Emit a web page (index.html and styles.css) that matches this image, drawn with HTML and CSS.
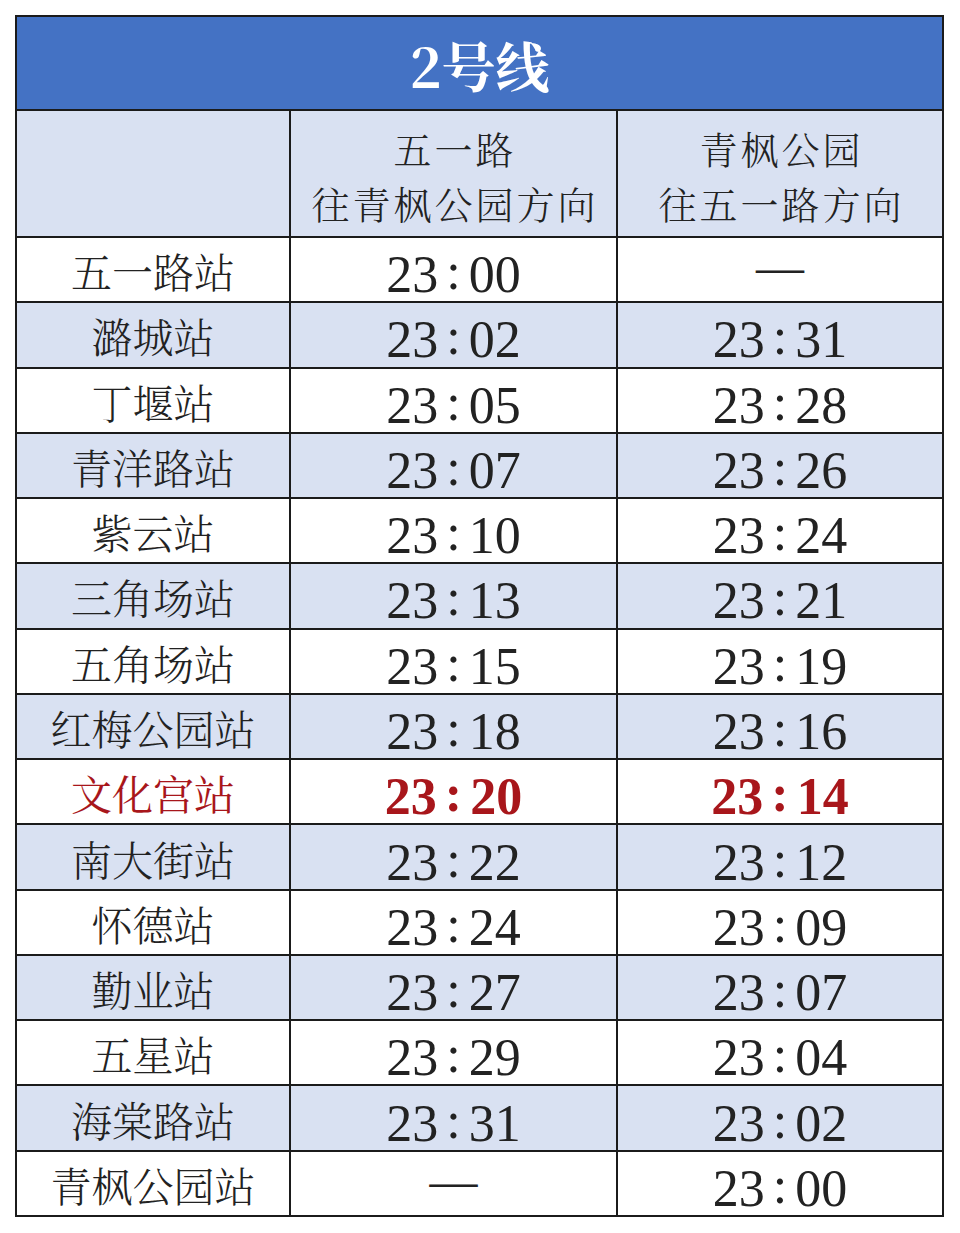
FILE: index.html
```html
<!DOCTYPE html>
<html lang="zh-CN">
<head>
<meta charset="utf-8">
<title>2号线</title>
<link rel="stylesheet" href="styles.css">
</head>
<body>
<div class="sheet">
  <div class="cell title">2号线</div>
  <div class="cell head"></div>
  <div class="cell head"><span>五一路</span><span>往青枫公园方向</span></div>
  <div class="cell head"><span>青枫公园</span><span>往五一路方向</span></div>

  <div class="cell name">五一路站</div><div class="cell time">23<i>:</i>00</div><div class="cell time"><b class="dash">—</b></div>
  <div class="cell name alt">潞城站</div><div class="cell time alt">23<i>:</i>02</div><div class="cell time alt">23<i>:</i>31</div>
  <div class="cell name">丁堰站</div><div class="cell time">23<i>:</i>05</div><div class="cell time">23<i>:</i>28</div>
  <div class="cell name alt">青洋路站</div><div class="cell time alt">23<i>:</i>07</div><div class="cell time alt">23<i>:</i>26</div>
  <div class="cell name">紫云站</div><div class="cell time">23<i>:</i>10</div><div class="cell time">23<i>:</i>24</div>
  <div class="cell name alt">三角场站</div><div class="cell time alt">23<i>:</i>13</div><div class="cell time alt">23<i>:</i>21</div>
  <div class="cell name">五角场站</div><div class="cell time">23<i>:</i>15</div><div class="cell time">23<i>:</i>19</div>
  <div class="cell name alt">红梅公园站</div><div class="cell time alt">23<i>:</i>18</div><div class="cell time alt">23<i>:</i>16</div>
  <div class="cell name hot">文化宫站</div><div class="cell time hot">23<i>:</i>20</div><div class="cell time hot">23<i>:</i>14</div>
  <div class="cell name alt">南大街站</div><div class="cell time alt">23<i>:</i>22</div><div class="cell time alt">23<i>:</i>12</div>
  <div class="cell name">怀德站</div><div class="cell time">23<i>:</i>24</div><div class="cell time">23<i>:</i>09</div>
  <div class="cell name alt">勤业站</div><div class="cell time alt">23<i>:</i>27</div><div class="cell time alt">23<i>:</i>07</div>
  <div class="cell name">五星站</div><div class="cell time">23<i>:</i>29</div><div class="cell time">23<i>:</i>04</div>
  <div class="cell name alt">海棠路站</div><div class="cell time alt">23<i>:</i>31</div><div class="cell time alt">23<i>:</i>02</div>
  <div class="cell name">青枫公园站</div><div class="cell time"><b class="dash">—</b></div><div class="cell time">23<i>:</i>00</div>
</div>
</body>
</html>
```
FILE: styles.css
```css
html, body {
  margin: 0;
  padding: 0;
  background: #ffffff;
}
body {
  width: 960px;
  height: 1233px;
}
.sheet {
  margin: 15px 0 0 15px;
  width: 929px;
  box-sizing: border-box;
  display: grid;
  grid-template-columns: 272px 325px 324px;
  grid-template-rows: 92px 125px;
  grid-auto-rows: 63.27px;
  gap: 2px;
  padding: 2px;
  background: #1b1b1b;
}
.cell {
  background: #ffffff;
  display: flex;
  align-items: center;
  justify-content: center;
  color: #222222;
  font-family: "Noto Serif CJK SC", "Noto Sans CJK SC", serif;
  font-weight: 300;
  box-sizing: border-box;
}
.alt, .head {
  background: #d9e1f2;
}
.title {
  grid-column: 1 / 4;
  background: #4472c4;
  color: #ffffff;
  font-size: 54px;
  font-weight: 700;
  padding-top: 2px;
}
.head {
  flex-direction: column;
  font-size: 38px;
  letter-spacing: 3px;
  padding-top: 2px;
}
.head span {
  display: block;
  height: 55px;
  line-height: 55px;
  margin-right: -3px;
}
.name {
  font-size: 41px;
  padding-top: 2px;
}
.time {
  font-family: "Liberation Serif", serif;
  font-weight: 400;
  font-size: 52px;
  padding-top: 10px;
}
.time i {
  font-style: normal;
  padding: 0 8px;
  position: relative;
  top: -3px;
}
.dash {
  font-weight: 400;
  font-size: 48px;
  position: relative;
  top: -8px;
}
.hot {
  color: #a8161b;
}
.name.hot {
  font-weight: 400;
}
.time.hot {
  font-weight: 700;
}
```
